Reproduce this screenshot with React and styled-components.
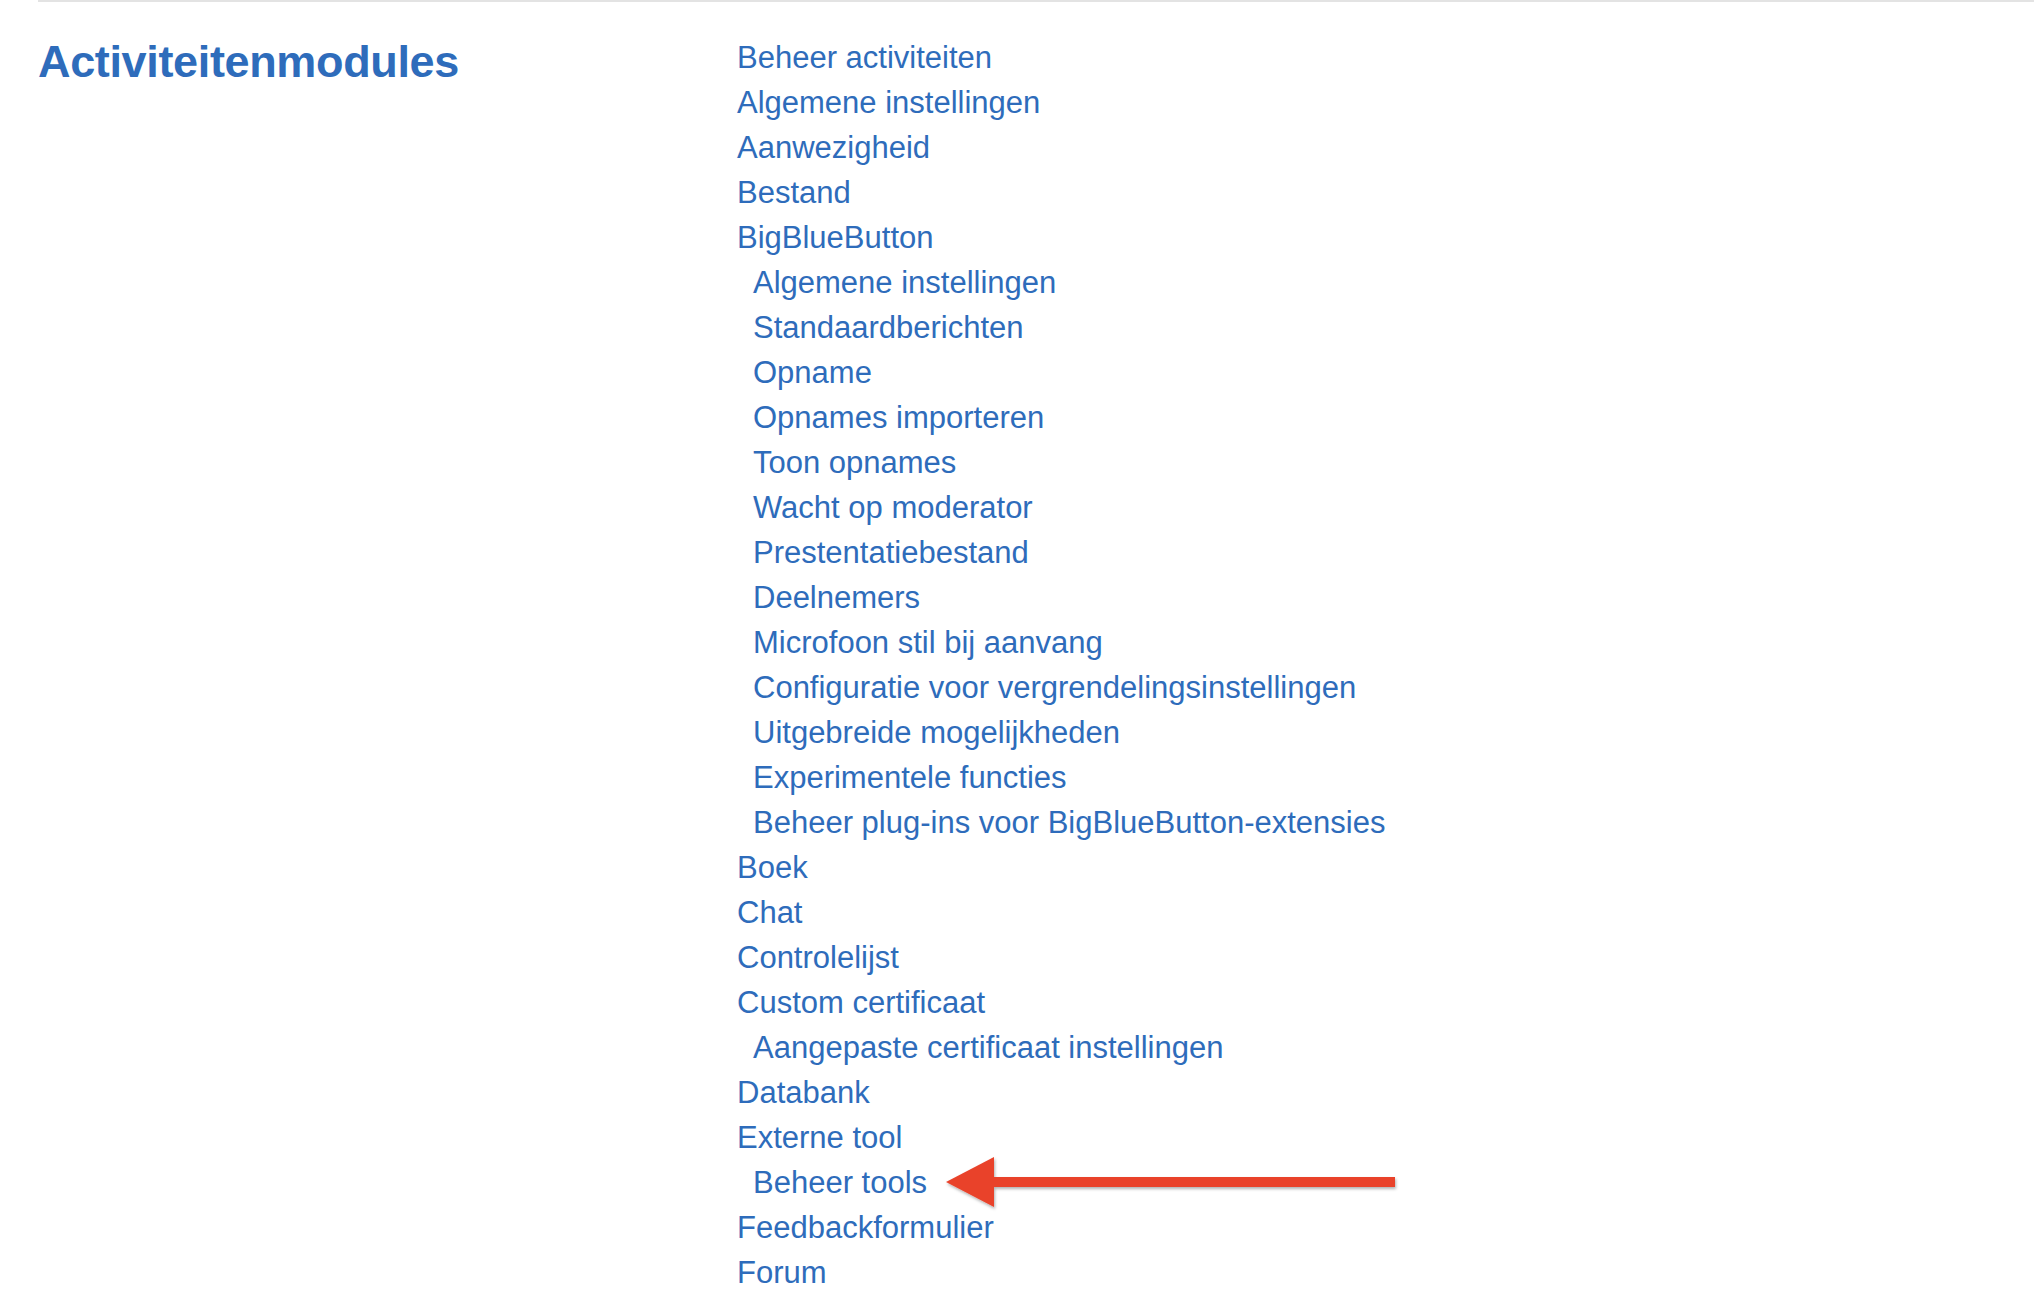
import React from "react";
import styled, { createGlobalStyle } from "styled-components";

const GlobalStyle = createGlobalStyle`
  html, body {
    margin: 0;
    padding: 0;
    background: #fff;
  }
  body {
    font-family: "Liberation Sans", Arial, sans-serif;
  }
`;

const items = [
  { label: "Beheer activiteiten" },
  { label: "Algemene instellingen" },
  { label: "Aanwezigheid" },
  { label: "Bestand" },
  { label: "BigBlueButton" },
  { label: "Algemene instellingen", sub: true },
  { label: "Standaardberichten", sub: true },
  { label: "Opname", sub: true },
  { label: "Opnames importeren", sub: true },
  { label: "Toon opnames", sub: true },
  { label: "Wacht op moderator", sub: true },
  { label: "Prestentatiebestand", sub: true },
  { label: "Deelnemers", sub: true },
  { label: "Microfoon stil bij aanvang", sub: true },
  { label: "Configuratie voor vergrendelingsinstellingen", sub: true },
  { label: "Uitgebreide mogelijkheden", sub: true },
  { label: "Experimentele functies", sub: true },
  { label: "Beheer plug-ins voor BigBlueButton-extensies", sub: true },
  { label: "Boek" },
  { label: "Chat" },
  { label: "Controlelijst" },
  { label: "Custom certificaat" },
  { label: "Aangepaste certificaat instellingen", sub: true },
  { label: "Databank" },
  { label: "Externe tool" },
  { label: "Beheer tools", sub: true, marked: true },
  { label: "Feedbackformulier" },
  { label: "Forum" },
];

const Arrow = () => (
  <ArrowSvg width="458" height="64" viewBox="0 0 458 64">
    <defs>
      <filter id="arrowShadow" x="-5%" y="-20%" width="110%" height="150%">
        <feDropShadow dx="1" dy="2" stdDeviation="1.5" floodColor="#000" floodOpacity="0.3" />
      </filter>
    </defs>
    <g filter="url(#arrowShadow)">
      <polygon points="2,31 50,6 50,56" fill="#e9432b" />
      <rect x="48" y="26" width="403" height="10" fill="#e9432b" />
    </g>
  </ArrowSvg>
);

export default function App() {
  return (
    <>
      <GlobalStyle />
      <Section>
        <Heading>Activiteitenmodules</Heading>
        <List>
          {items.map((item, i) => (
            <Item key={i} $sub={item.sub}>
              <Link href="#">{item.label}</Link>
              {item.marked && <Arrow />}
            </Item>
          ))}
        </List>
      </Section>
    </>
  );
}

const Section = styled.section`
  margin-left: 38px;
  border-top: 2px solid #e3e3e3;
  display: grid;
  grid-template-columns: 699px 1fr;
  padding-top: 32px;
`;

const Heading = styled.h2`
  margin: 0;
  color: #2e6cbb;
  font-family: "Liberation Sans", Arial, sans-serif;
  font-weight: 700;
  font-size: 45px;
  line-height: 56px;
  letter-spacing: -0.35px;
`;

const List = styled.ul`
  list-style: none;
  margin: 0;
  padding: 1px 0 0;
`;

const Item = styled.li`
  position: relative;
  display: flex;
  align-items: center;
  height: 45px;
  padding-left: ${(p) => (p.$sub ? "16px" : "0")};
`;

const Link = styled.a`
  color: #2e6cbb;
  text-decoration: none;
  font-size: 31px;
  line-height: 45px;
  white-space: nowrap;
`;

const ArrowSvg = styled.svg`
  position: absolute;
  left: 207px;
  top: 50%;
  transform: translateY(-50%);
  overflow: visible;
`;
